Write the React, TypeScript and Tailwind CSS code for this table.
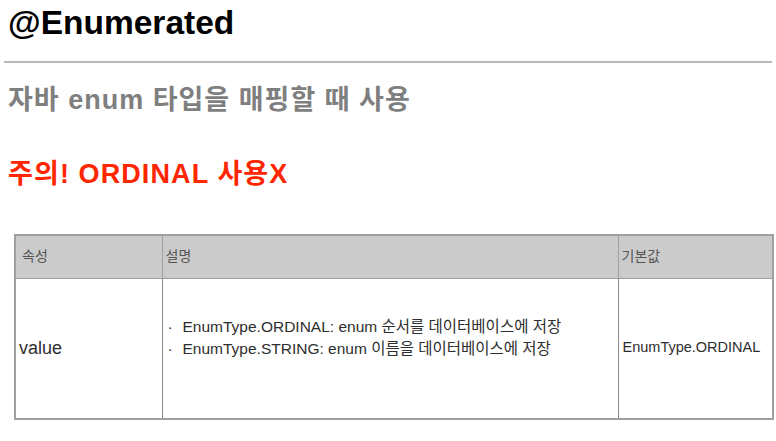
export default function App() {
  return (
    <div
      className="w-[776px] h-[441px] bg-white overflow-hidden"
      style={{ fontFamily: '"Liberation Sans", "Noto Sans CJK KR", sans-serif' }}
    >
      <h1 className="pl-2 pt-[3px] text-[33.5px] leading-[40px] font-bold text-black">
        @Enumerated
      </h1>
      <div className="mx-1 mt-[18px] h-[2px] bg-[#b8b8b8]" />
      <h2 className="pl-2 mt-[19px] text-[27px] leading-[36px] font-bold tracking-[1px] text-[#7f7f7f]">
        자바 enum 타입을 매핑할 때 사용
      </h2>
      <h2 className="pl-2 mt-[38px] text-[27px] leading-[36px] font-bold tracking-[1.1px] text-[#ff2600]">
        주의! ORDINAL 사용X
      </h2>
      <table className="ml-[14px] mt-[42px] w-[760px] border-collapse border-2 border-[#a0a0a0] text-[#2e2e2e]">
        <thead>
          <tr className="h-[43px] bg-[#cbcbcb] text-[14px] text-[#555]">
            <th className="w-[147px] border border-[#a0a0a0] px-[6px] text-left font-normal">속성</th>
            <th className="w-[456px] border-y border-[#a0a0a0] px-[3px] text-left font-normal">설명</th>
            <th className="border border-[#a0a0a0] px-[3px] text-left font-normal">기본값</th>
          </tr>
        </thead>
        <tbody>
          <tr className="h-[141px]">
            <td className="border border-[#888] px-[3px] text-[18px]">value</td>
            <td className="border border-[#888] pl-[5px] pr-[3px] pb-[20px] text-[15.5px] leading-[22px]">
              <div className="flex">
                <span className="w-[15px]">·</span>
                <span>EnumType.ORDINAL: enum 순서를 데이터베이스에 저장</span>
              </div>
              <div className="flex">
                <span className="w-[15px]">·</span>
                <span>EnumType.STRING: enum 이름을 데이터베이스에 저장</span>
              </div>
            </td>
            <td className="border border-[#888] px-[4px] text-[14.5px]">EnumType.ORDINAL</td>
          </tr>
        </tbody>
      </table>
    </div>
  );
}
